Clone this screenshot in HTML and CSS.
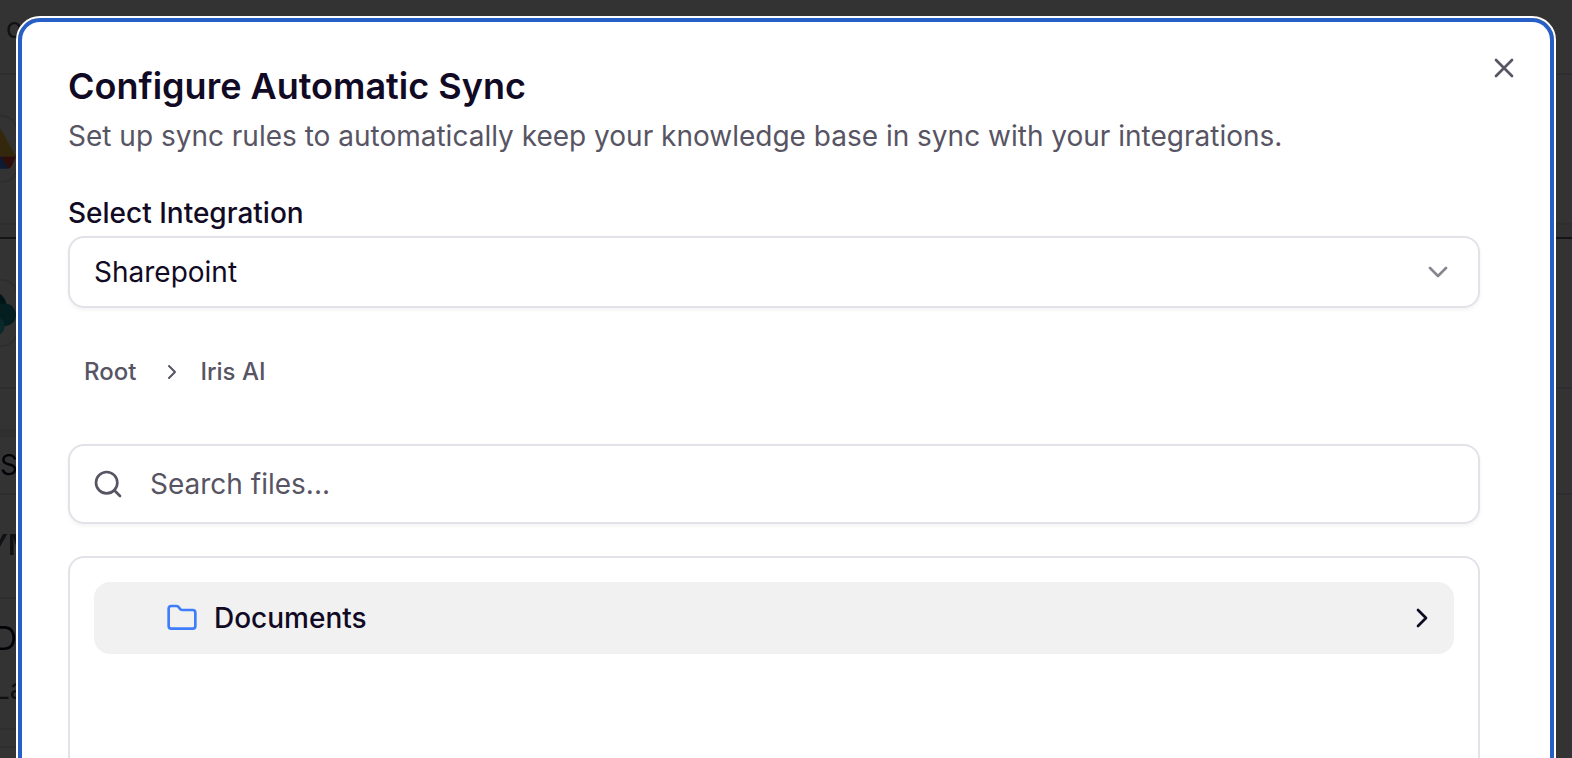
FILE: index.html
```html
<!DOCTYPE html>
<html lang="en">
<head>
    <meta charset="UTF-8">
    <meta name="viewport" content="width=device-width, initial-scale=1.0">
    <title>Configure Automatic Sync</title>
    <link rel="stylesheet" href="styles.css">
</head>
<body>

    <!-- Page behind the dialog, scrolled partly out of view -->
    <div class="page" aria-hidden="true">
        <div class="page-intro">o</div>
        <div class="page-row">
            <svg class="tile" viewBox="0 0 68 68">
                <path fill="#ffc83c" d="M38 13h14l16 29H52z"/>
                <path fill="#ea4335" d="M50 42h18l-4 9q-2 4-5 4z"/>
                <path fill="#4285f4" d="M26 42h26l8 13H30z"/>
            </svg>
        </div>
        <div class="page-divider"></div>
        <div class="page-row">
            <svg class="tile" viewBox="0 0 68 68">
                <circle fill="#036c70" cx="42" cy="27" r="16"/>
                <circle fill="#1a9ba1" cx="56" cy="36" r="12"/>
                <circle fill="#37c6d0" cx="46" cy="48" r="10"/>
            </svg>
        </div>
        <div class="page-band"></div>
        <div class="page-filter">S</div>
        <div class="page-table">
            <div class="page-heading">YM</div>
            <div class="page-item">
                <div>D</div>
                <div class="page-note">La</div>
            </div>
            <div class="page-gap"></div>
        </div>
    </div>

    <div class="overlay">
        <div class="dialog" role="dialog" aria-labelledby="title">
            <h1 id="title">Configure Automatic Sync</h1>
            <p class="description">Set up sync rules to automatically keep your knowledge base in sync with your integrations.</p>

            <label for="integration">Select Integration</label>
            <div class="select-box">
                <select id="integration">
                    <option>Sharepoint</option>
                </select>
                <svg class="icon" viewBox="0 0 24 24"><path d="m6 9 6 6 6-6"/></svg>
            </div>

            <nav class="breadcrumb">
                <button>Root</button>
                <svg class="icon" viewBox="0 0 24 24"><path d="m9 18 6-6-6-6"/></svg>
                <button>Iris AI</button>
            </nav>

            <div class="search-box">
                <svg class="icon" viewBox="0 0 24 24"><circle cx="11" cy="11" r="8"/><path d="m21 21-4.3-4.3"/></svg>
                <input type="text" aria-label="Search files" placeholder="Search files...">
            </div>

            <div class="file-list">
                <button class="file-row">
                    <svg class="icon folder" viewBox="0 0 24 24"><path d="M20 20a2 2 0 0 0 2-2V8a2 2 0 0 0-2-2h-7.9a2 2 0 0 1-1.69-.9L9.6 3.9A2 2 0 0 0 7.93 3H4a2 2 0 0 0-2 2v13a2 2 0 0 0 2 2Z"/></svg>
                    <span class="file-name">Documents</span>
                    <svg class="icon" viewBox="0 0 24 24"><path d="m9 18 6-6-6-6"/></svg>
                </button>
            </div>

            <button class="close" aria-label="Close">
                <svg class="icon" viewBox="0 0 24 24"><path d="M18 6 6 18M6 6l12 12"/></svg>
            </button>
        </div>
    </div>

</body>
</html>
```

FILE: styles.css
```css
* {
    box-sizing: border-box;
}
body {
    margin: 0;
    font-family: Inter, sans-serif;
    font-size: 28px;
    line-height: 40px;
    color: #110a24;
    background-color: #fff;
}
button, input, select {
    font: inherit;
    color: inherit;
    margin: 0;
    border: none;
    background: none;
}

/* page behind */
.page {
    position: fixed;
    inset: 0;
    overflow: hidden;
}
.page-intro, .page-row, .page-filter, .page-heading, .page-item, .page-gap {
    border-bottom: 2px solid #e3e2e8;
}
.page-intro {
    height: 75px;
    padding: 8px 6px;
    color: #575463;
}
.page-row {
    height: 150px;
    padding-top: 40px;
}
.tile {
    display: block;
    width: 68px;
    height: 68px;
    margin-left: -50px;
    border: 2px solid #e3e2e8;
    border-radius: 16px;
}
.page-divider {
    height: 14px;
    background-color: #f6f6f8;
    border-bottom: 2px solid #6a6772;
}
.page-band {
    width: 50%;
    height: 48px;
    border-bottom: 8px solid #ececf0;
}
.page-filter {
    height: 58px;
    padding-top: 8px;
}
.page-table {
    width: 50%;
}
.page-heading {
    height: 104px;
    padding-top: 30px;
    margin-left: -12px;
    font-weight: 600;
    color: #575463;
}
.page-item {
    height: 131px;
    padding-top: 20px;
    margin-left: -6px;
    font-size: 32px;
}
.page-note {
    padding-top: 10px;
    font-size: 28px;
    color: #575463;
}
.page-gap {
    height: 18px;
}

.overlay {
    position: fixed;
    inset: 0;
    display: flex;
    padding: 18px 18px 0;
    background-color: rgba(0, 0, 0, 0.8);
    overflow: hidden;
}
.dialog {
    position: relative;
    flex: 1;
    display: flex;
    flex-direction: column;
    padding: 46px 70px 0 46px;
    background-color: #fff;
    border: 4px solid #265fc8;
    border-bottom: none;
    border-radius: 22px 22px 0 0;
    outline: 2px solid #fff;
}
.icon {
    width: 32px;
    height: 32px;
    flex: none;
    fill: none;
    stroke: currentColor;
    stroke-width: 2;
    stroke-linecap: round;
    stroke-linejoin: round;
}
h1 {
    margin: 0 0 12px;
    font-size: 36px;
    line-height: 36px;
    font-weight: 600;
}
.description {
    margin: 0 0 37px;
    color: #575463;
}
label {
    font-weight: 500;
}
.select-box {
    display: grid;
    align-items: center;
    height: 72px;
    margin-top: 3px;
}
.select-box select, .select-box .icon {
    grid-area: 1 / 1;
}
.select-box select {
    width: 100%;
    height: 100%;
    padding: 0 24px;
    appearance: none;
}
.select-box .icon {
    justify-self: end;
    margin-right: 26px;
    color: #88858f;
    pointer-events: none;
}
.select-box select, .search-box, .file-list {
    border: 2px solid #e3e2e8;
    border-radius: 16px;
}
.select-box select, .search-box {
    box-shadow: 0 2px 4px rgba(0, 0, 0, 0.05);
}
.breadcrumb {
    display: flex;
    align-items: center;
    height: 56px;
    margin: 36px 0 44px;
    font-size: 24px;
    font-weight: 500;
    color: #575463;
}
.breadcrumb button {
    padding: 0 16px;
}
.breadcrumb .icon {
    width: 24px;
    height: 24px;
    margin-left: 8px;
}
.search-box {
    display: flex;
    align-items: center;
    gap: 26px;
    height: 80px;
    padding: 0 22px;
    color: #575463;
}
.search-box input {
    flex: 1;
    padding: 0;
    outline: none;
}
.search-box input::placeholder {
    color: #575463;
}
.file-list {
    flex: 1;
    margin-top: 32px;
    padding: 24px;
    border-bottom: none;
    border-radius: 16px 16px 0 0;
}
.file-row {
    display: flex;
    align-items: center;
    gap: 16px;
    width: 100%;
    height: 72px;
    padding: 0 16px 0 72px;
    background-color: #f1f1f1;
    border-radius: 16px;
    font-weight: 500;
    text-align: left;
}
.folder {
    color: #3f7dfb;
}
.file-name {
    flex: 1;
}
.close {
    position: absolute;
    top: 30px;
    right: 30px;
    display: flex;
    padding: 0;
    color: #575463;
}
```
